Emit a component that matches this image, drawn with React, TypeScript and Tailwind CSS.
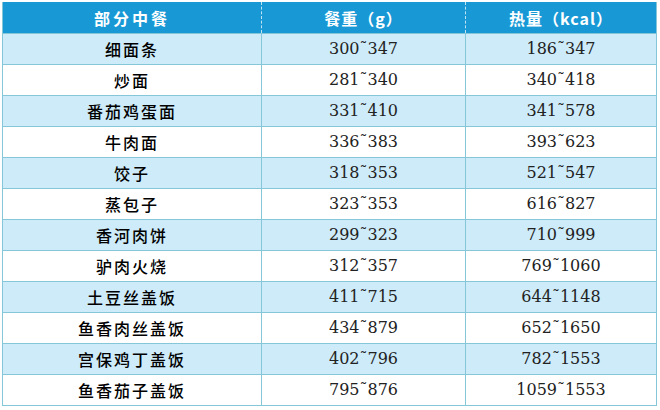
import React from "react";

const rows: [string, string, string][] = [
  ["细面条", "300", "347", ],
  ["炒面", "281", "340"],
  ["番茄鸡蛋面", "331", "410"],
  ["牛肉面", "336", "383"],
  ["饺子", "318", "353"],
  ["蒸包子", "323", "353"],
  ["香河肉饼", "299", "323"],
  ["驴肉火烧", "312", "357"],
  ["土豆丝盖饭", "411", "715"],
  ["鱼香肉丝盖饭", "434", "879"],
  ["宫保鸡丁盖饭", "402", "796"],
  ["鱼香茄子盖饭", "795", "876"],
];

const kcal: [string, string][] = [
  ["186", "347"],
  ["340", "418"],
  ["341", "578"],
  ["393", "623"],
  ["521", "547"],
  ["616", "827"],
  ["710", "999"],
  ["769", "1060"],
  ["644", "1148"],
  ["652", "1650"],
  ["782", "1553"],
  ["1059", "1553"],
];

const cjk = { fontFamily: '"Noto Sans CJK SC", sans-serif' };
const num = { fontFamily: '"DejaVu Serif", serif' };

export default function App() {
  return (
    <div className="w-[660px] h-[410px] bg-white pt-[2px] pl-[2px]">
      <div className="w-[655px] border-l border-r border-b border-[#86c6d9]">
        <div className="grid grid-cols-[259px_204px_190px] h-[31px] bg-[#1899d6] text-white font-bold text-[16px]" style={cjk}>
          <div className="flex items-center justify-center tracking-[3px] border-r border-dashed border-[#bfe3f3]">部分中餐</div>
          <div className="flex items-center justify-center tracking-[1px] border-r border-dashed border-[#bfe3f3]">餐重（g）</div>
          <div className="flex items-center justify-center tracking-[1px]">热量（kcal）</div>
        </div>
        {rows.map((r, i) => (
          <div
            key={i}
            className={`grid grid-cols-[259px_204px_190px] h-[31px] border-t border-[#86c6d9] text-black ${i % 2 === 0 ? "bg-[#cdebf9]" : "bg-white"}`}
          >
            <div className="flex items-center justify-center border-r border-[#86c6d9] text-[16px] font-medium tracking-[2px]" style={cjk}>
              {r[0]}
            </div>
            <div className="flex items-center justify-center border-r border-[#86c6d9] text-[16px] text-[#222]" style={num}>
              {r[1]}˜{r[2]}
            </div>
            <div className="flex items-center justify-center text-[16px] text-[#222]" style={num}>
              {kcal[i][0]}˜{kcal[i][1]}
            </div>
          </div>
        ))}
      </div>
    </div>
  );
}
